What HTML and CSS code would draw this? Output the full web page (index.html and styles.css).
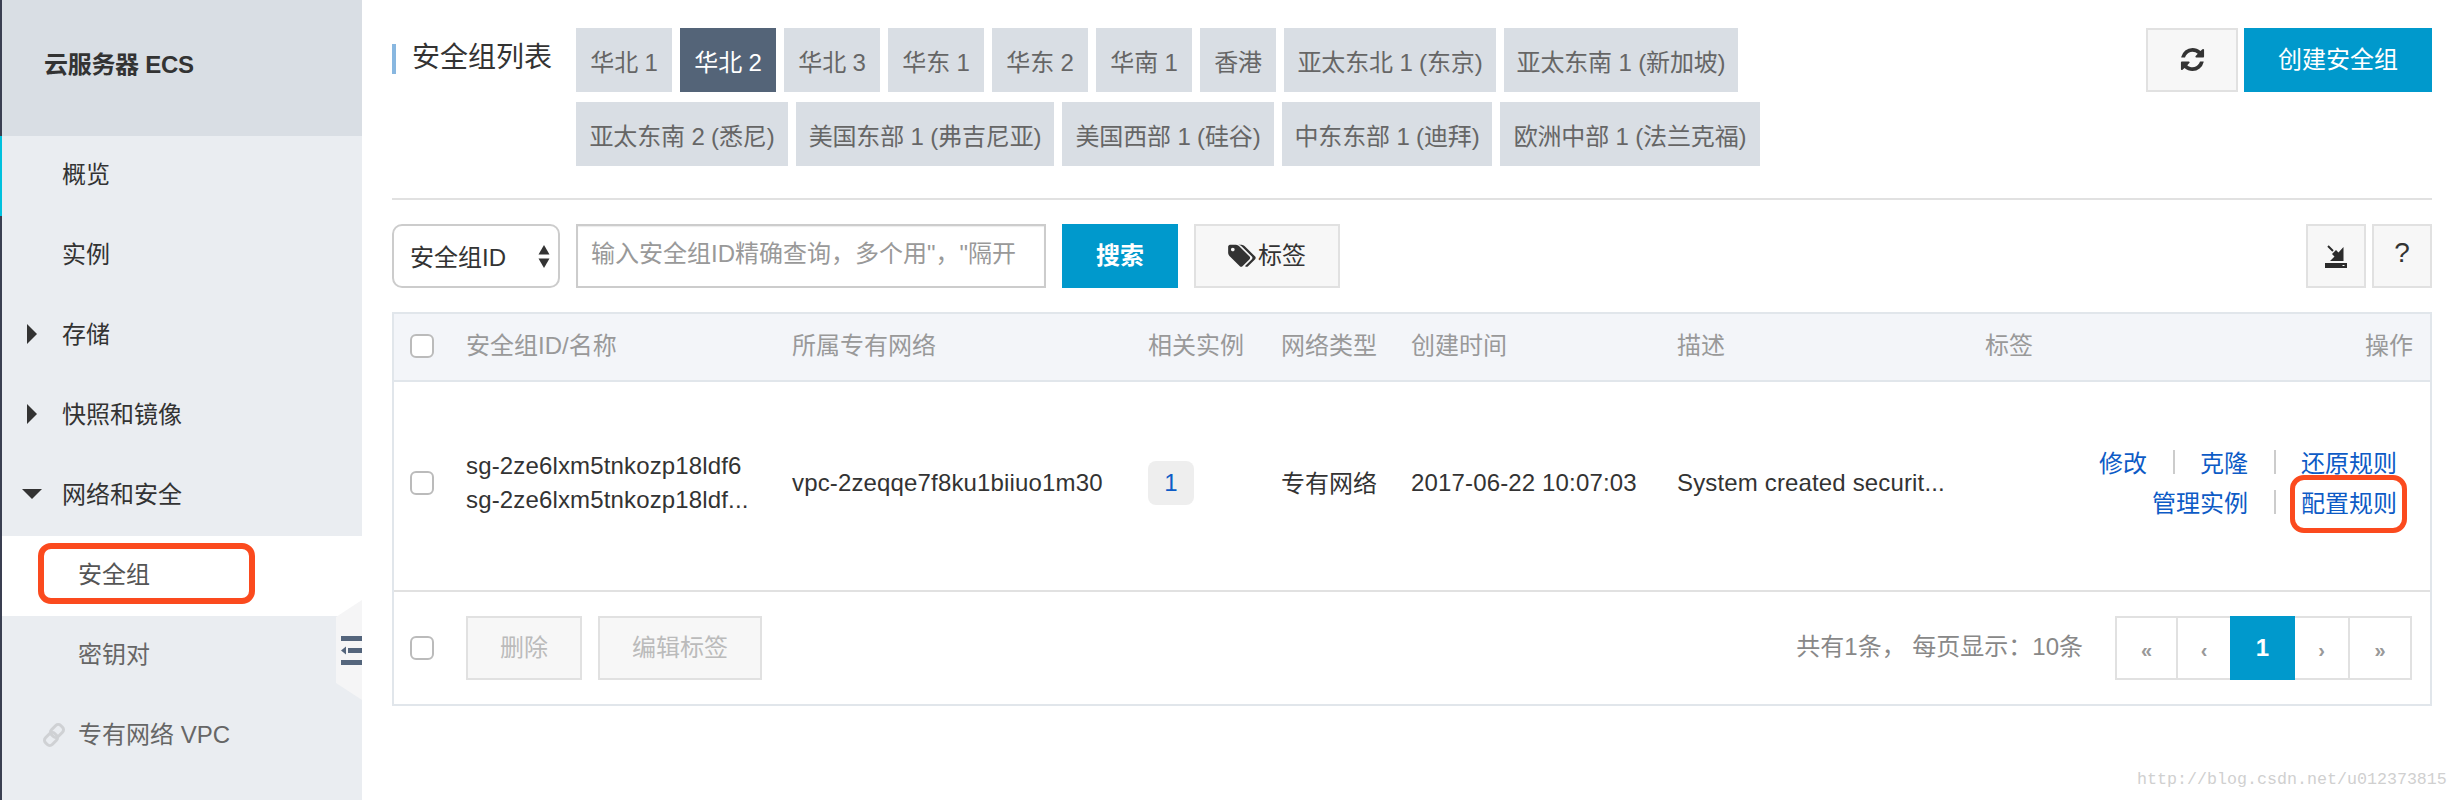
FILE: index.html
```html
<!DOCTYPE html>
<html lang="zh-CN">
<head>
<meta charset="utf-8">
<title>安全组列表</title>
<link rel="stylesheet" href="styles.css">
</head>
<body>
<div class="app">
  <aside class="sidebar">
    <div class="side-head">云服务器 ECS</div>
    <nav class="side-nav">
      <a class="nav-item nav-current">概览</a>
      <a class="nav-item">实例</a>
      <a class="nav-item"><i class="caret-right"></i>存储</a>
      <a class="nav-item"><i class="caret-right"></i>快照和镜像</a>
      <a class="nav-item"><i class="caret-down"></i>网络和安全</a>
      <a class="nav-item sub-item sub-active">安全组<span class="mark mark-nav"></span></a>
      <a class="nav-item sub-item">密钥对</a>
      <a class="nav-item sub-item">
        <svg class="link-icon" viewBox="0 0 22 26" aria-hidden="true"><g fill="none" stroke="#cfd1d4" stroke-width="3"><rect x="-4.75" y="-6.5" width="9.5" height="13" rx="3.5" transform="translate(14 9) rotate(45)"/><rect x="-4.75" y="-6.5" width="9.5" height="13" rx="3.5" transform="translate(8 17) rotate(45)"/></g></svg>
        专有网络 VPC</a>
    </nav>
    <div class="collapse-tab">
      <svg viewBox="0 0 26 100" aria-hidden="true"><polygon points="26,0 0,17 0,83 26,100" fill="#f5f5f6"/><g fill="#54657c"><rect x="5" y="36" width="21" height="5"/><rect x="5" y="60" width="21" height="5"/><rect x="12" y="48" width="14" height="5"/><polygon points="5,50.5 10,46.5 10,54.5"/></g></svg>
    </div>
  </aside>

  <main class="main">
    <header class="top">
      <h1 class="title">安全组列表</h1>
      <div class="tabs">
        <a class="tab w96">华北 1</a>
        <a class="tab w96 tab-on">华北 2</a>
        <a class="tab w96">华北 3</a>
        <a class="tab w96">华东 1</a>
        <a class="tab w96">华东 2</a>
        <a class="tab w96">华南 1</a>
        <a class="tab w76">香港</a>
        <a class="tab w212">亚太东北 1 (东京)</a>
        <a class="tab w234">亚太东南 1 (新加坡)</a>
        <a class="tab w212">亚太东南 2 (悉尼)</a>
        <a class="tab w258">美国东部 1 (弗吉尼亚)</a>
        <a class="tab w212">美国西部 1 (硅谷)</a>
        <a class="tab w210">中东东部 1 (迪拜)</a>
        <a class="tab w260">欧洲中部 1 (法兰克福)</a>
      </div>
      <div class="top-actions">
        <button class="btn btn-refresh" aria-label="刷新">
          <svg class="refresh-icon" viewBox="0 0 1792 1792" aria-hidden="true"><path d="M1639 1056q0 5-1 7-64 268-268 434.5t-478 166.5q-146 0-282.5-55t-243.5-157l-129 129q-19 19-45 19t-45-19-19-45v-448q0-26 19-45t45-19h448q26 0 45 19t19 45-19 45l-137 137q71 66 161 102t187 36q134 0 250-65t186-179q11-17 53-117 8-23 30-23h192q13 0 22.5 9.5t9.5 22.5zm25-800v448q0 26-19 45t-45 19h-448q-26 0-45-19t-19-45 19-45l138-138q-148-137-349-137-134 0-250 65t-186 179q-11 17-53 117-8 23-30 23h-199q-13 0-22.5-9.5t-9.5-22.5v-7q65-268 270-434.5t480-166.5q146 0 284 55.5t245 156.5l130-129q19-19 45-19t45 19 19 45z" fill="#333"/></svg>
        </button>
        <button class="btn btn-primary btn-create">创建安全组</button>
      </div>
    </header>

    <div class="divider"></div>

    <div class="toolbar">
      <div class="select">安全组ID
        <svg class="select-arrows" viewBox="0 0 12 24" aria-hidden="true"><polygon points="6,0 11.5,9.5 0.5,9.5" fill="#333"/><polygon points="6,23 11.5,13.5 0.5,13.5" fill="#333"/></svg>
      </div>
      <input class="search-input" type="text" placeholder="输入安全组ID精确查询，多个用&quot;，&quot;隔开">
      <button class="btn btn-primary btn-search">搜索</button>
      <button class="btn btn-tag">
        <svg class="tag-icon" viewBox="0 0 1920 1792" aria-hidden="true"><path d="M384 448q0-53-37.5-90.5t-90.5-37.5-90.5 37.5-37.5 90.5 37.5 90.5 90.5 37.5 90.5-37.5 37.5-90.5zm1067 576q0 53-37 90l-491 492q-39 37-91 37-53 0-90-37l-715-716q-38-37-64.5-101t-26.5-117v-416q0-52 38-90t90-38h416q53 0 117 26.5t102 64.5l715 714q37 39 37 91zm384 0q0 53-37 90l-491 492q-39 37-91 37-36 0-59-14t-53-45l470-470q37-37 37-90 0-52-37-91l-715-714q-38-38-102-64.5t-117-26.5h224q53 0 117 26.5t102 64.5l715 714q37 39 37 91z" fill="#333"/></svg>标签
      </button>
      <div class="spacer"></div>
      <button class="btn btn-square" aria-label="导出">
        <svg class="export-icon" viewBox="0 0 22 23" aria-hidden="true"><rect x="0" y="18" width="22" height="5" fill="#2b2b2b"/><rect x="17.5" y="20" width="2" height="1" fill="#fff"/><polygon points="18.5,2 18.5,16 5,16 9.5,11.5 7,9 11,5 13.5,7.5" fill="#2b2b2b"/><path d="M3 1 L8 6" stroke="#2b2b2b" stroke-width="2" fill="none"/></svg>
      </button>
      <button class="btn btn-square btn-help">?</button>
    </div>

    <section class="panel">
      <table class="grid">
        <thead>
          <tr>
            <th class="c-check"><input class="check" type="checkbox"></th>
            <th class="c-id">安全组ID/名称</th>
            <th class="c-vpc">所属专有网络</th>
            <th class="c-inst">相关实例</th>
            <th class="c-type">网络类型</th>
            <th class="c-time">创建时间</th>
            <th class="c-desc">描述</th>
            <th class="c-tag">标签</th>
            <th class="c-ops">操作</th>
          </tr>
        </thead>
        <tbody>
          <tr>
            <td><input class="check" type="checkbox"></td>
            <td class="latin"><div class="two-lines">sg-2ze6lxm5tnkozp18ldf6<br>sg-2ze6lxm5tnkozp18ldf...</div></td>
            <td class="latin">vpc-2zeqqe7f8ku1biiuo1m30</td>
            <td><a class="badge">1</a></td>
            <td class="cjk">专有网络</td>
            <td class="latin">2017-06-22 10:07:03</td>
            <td class="latin">System created securit...</td>
            <td></td>
            <td class="ops-cell">
              <div class="ops-line"><a class="op">修改</a><i class="sep"></i><a class="op">克隆</a><i class="sep"></i><a class="op">还原规则</a></div>
              <div class="ops-line"><a class="op">管理实例</a><i class="sep"></i><a class="op op-marked">配置规则<span class="mark mark-op"></span></a></div>
            </td>
          </tr>
        </tbody>
      </table>
      <div class="foot">
        <input class="check" type="checkbox">
        <button class="btn btn-off btn-del">删除</button>
        <button class="btn btn-off btn-edit">编辑标签</button>
        <div class="spacer"></div>
        <span class="count">共有1条， 每页显示：10条</span>
        <div class="pager">
          <a class="pg pg-first">«</a>
          <a class="pg pg-prev">‹</a>
          <a class="pg pg-on">1</a>
          <a class="pg pg-next">›</a>
          <a class="pg pg-last">»</a>
        </div>
      </div>
    </section>
  </main>
</div>
<div class="watermark">http://blog.csdn.net/u012373815</div>
</body>
</html>
```

FILE: styles.css
```css
* { box-sizing: border-box; }
html, body { margin: 0; padding: 0; background: #fff; }
body {
  width: 2458px;
  height: 800px;
  overflow: hidden;
  position: relative;
  font-family: "Liberation Sans", "Noto Sans CJK SC", sans-serif;
  font-size: 24px;
  color: #333;
}
a { text-decoration: none; color: inherit; }
i { font-style: normal; }
.app { display: flex; height: 800px; }
.spacer { flex: 1; }

/* sidebar */
.sidebar {
  width: 362px;
  flex: none;
  background: #eaedf1;
  border-left: 2px solid #3a3f51;
  position: relative;
}
.side-head {
  height: 136px;
  margin-left: -2px;
  padding: 0 0 12px 42px;
  background: #d9dee4;
  border-left: 2px solid #3a3f51;
  display: flex;
  align-items: center;
  font-weight: bold;
  letter-spacing: -0.3px;
  color: #333;
}
.side-nav { display: flex; flex-direction: column; }
.nav-item {
  height: 80px;
  padding: 0 0 8px 60px;
  display: flex;
  align-items: center;
  position: relative;
  color: #333;
}
.nav-current { box-shadow: -2px 0 0 #00c1de; }
.sub-item { padding-left: 76px; color: #666; }
.sub-active { background: #fff; color: #555; }
.caret-right {
  position: absolute;
  left: 25px;
  top: 28px;
  border-left: 10px solid #333;
  border-top: 10px solid transparent;
  border-bottom: 10px solid transparent;
}
.caret-down {
  position: absolute;
  left: 20px;
  top: 33px;
  border-top: 10px solid #333;
  border-left: 10px solid transparent;
  border-right: 10px solid transparent;
}
.link-icon { position: absolute; left: 41px; top: 26px; width: 22px; height: 26px; overflow: visible; }
.collapse-tab { position: absolute; right: 0; top: 600px; width: 26px; height: 100px; }
.collapse-tab svg { display: block; width: 26px; height: 100px; }
.mark { position: absolute; border: 6px solid #fb4a1e; border-radius: 13px; }
.mark-nav { left: 36px; top: 7px; width: 217px; height: 61px; }

/* main */
.main { flex: 1; min-width: 0; padding: 28px 26px 0 30px; }
.top { display: flex; align-items: flex-start; }
.title {
  margin: 16px 0 0;
  width: 184px;
  flex: none;
  height: 30px;
  padding-left: 16px;
  border-left: 4px solid #88b7e0;
  font-size: 28px;
  line-height: 28px;
  font-weight: normal;
  color: #333;
}
.tabs { width: 1200px; display: flex; flex-wrap: wrap; gap: 10px 8px; }
.tab {
  height: 64px;
  display: flex;
  align-items: center;
  justify-content: center;
  background: #d9dee4;
  color: #666;
  white-space: nowrap;
  letter-spacing: -0.15px;
}
.tab-on { background: #546478; color: #fff; }
.w76 { width: 76px; }
.w96 { width: 96px; }
.w210 { width: 210px; }
.w212 { width: 212px; }
.w234 { width: 234px; }
.w258 { width: 258px; }
.w260 { width: 260px; }
.top-actions { margin-left: auto; display: flex; gap: 6px; }

.btn {
  height: 64px;
  padding: 0 0 5px;
  margin: 0;
  display: flex;
  align-items: center;
  justify-content: center;
  border: 2px solid #e1e1e1;
  background: #f7f7f7;
  color: #333;
  font: inherit;
}
.btn-primary { background: #0099cc; border-color: #0099cc; color: #fff; }
.btn-refresh { width: 92px; padding: 0 0 2px; }
.refresh-icon { width: 27px; height: 27px; }
.btn-create { width: 188px; }

.divider { height: 2px; margin-top: 32px; background: #e1e1e1; }

/* toolbar */
.toolbar { display: flex; margin-top: 24px; height: 64px; }
.select {
  width: 168px;
  height: 64px;
  padding: 0 0 2px 16px;
  display: flex;
  align-items: center;
  border: 2px solid #ccc;
  border-radius: 10px;
  background: #fff;
  color: #333;
  position: relative;
}
.select-arrows { position: absolute; right: 8px; top: 19px; width: 12px; height: 24px; }
.search-input {
  width: 470px;
  height: 64px;
  margin-left: 16px;
  padding: 0 13px 5px;
  border: 2px solid #ccc;
  box-shadow: inset 0 1px 1px rgba(0,0,0,.08);
  outline: none;
  background: #fff;
  font: inherit;
  color: #333;
}
.search-input::placeholder { color: #999; opacity: 1; }
.btn-search { width: 116px; margin-left: 16px; font-weight: bold; }
.btn-tag { width: 146px; margin-left: 16px; }
.tag-icon { width: 30px; height: 26px; margin-top: 5px; }
.btn-square { width: 60px; padding: 0; }
.btn-square + .btn-square { margin-left: 6px; }
.export-icon { width: 22px; height: 23px; }
.btn-help { font-size: 28px; padding-bottom: 6px; }

/* table */
.panel { margin-top: 24px; border: 2px solid #e1e6eb; }
.grid { width: 100%; table-layout: fixed; border-collapse: separate; border-spacing: 0; }
.grid th {
  height: 68px;
  padding: 0 0 8px;
  background: #f3f5f9;
  border-bottom: 2px solid #e1e6eb;
  text-align: left;
  font-weight: normal;
  color: #999;
}
.grid th.c-check { padding-bottom: 2px; }
.grid td {
  height: 210px;
  padding: 0 0 6px;
  border-bottom: 2px solid #e1e1e1;
  color: #333;
  vertical-align: middle;
}
.grid td.latin { letter-spacing: 0.15px; }
.grid td.cjk { padding-bottom: 9px; }
.c-check { width: 72px; }
.c-id { width: 326px; }
.c-vpc { width: 356px; }
.c-inst { width: 133px; }
.c-type { width: 130px; }
.c-time { width: 266px; }
.c-desc { width: 308px; }
.c-tag { width: 120px; }
.grid .c-ops { text-align: right; padding-right: 17px; }
.check {
  appearance: none;
  display: block;
  width: 24px;
  height: 24px;
  margin: 0 0 0 16px;
  border: 2px solid #bbb;
  border-radius: 6px;
  background: #fff;
  flex: none;
}
.two-lines { line-height: 34px; }
.badge {
  display: flex;
  width: 46px;
  height: 44px;
  align-items: center;
  justify-content: center;
  background: #eeeeee;
  border-radius: 8px;
  color: #0d5bc6;
}
.grid td.ops-cell { padding: 0 33px 6px 0; }
.ops-line { display: flex; justify-content: flex-end; align-items: center; height: 40px; padding-bottom: 3px; }
.op { color: #0d5bc6; position: relative; white-space: nowrap; }
.op-marked { display: block; }
.mark-op { left: -11px; top: -9px; width: 117px; height: 58px; border-width: 5px; border-radius: 14px; }
.sep { width: 2px; height: 24px; background: #ccc; margin: 0 25.5px; flex: none; }

/* footer */
.foot { display: flex; align-items: center; height: 112px; padding-right: 18px; }
.foot .check { margin-left: 16px; }
.btn-off { color: #bbb; }
.btn-del { width: 116px; margin-left: 32px; }
.btn-edit { width: 164px; margin-left: 16px; }
.count { color: #888; margin-right: 32px; padding-bottom: 8px; }
.pager { display: flex; height: 64px; }
.pg {
  height: 64px;
  display: flex;
  align-items: center;
  justify-content: center;
  padding-top: 4px;
  border: 2px solid #e1e1e1;
  margin-left: -2px;
  color: #999;
  font-size: 20px;
  font-weight: bold;
  background: #fff;
}
.pg-first { width: 63px; margin-left: 0; }
.pg-prev { width: 56px; }
.pg-on { width: 65px; background: #0099cc; border-color: #0099cc; color: #fff; font-size: 24px; position: relative; padding-top: 0; }
.pg-next { width: 57px; }
.pg-last { width: 64px; }

.watermark {
  position: absolute;
  left: 2137px;
  top: 770px;
  font-family: "Liberation Mono", monospace;
  font-size: 16.67px;
  line-height: 20px;
  color: #d0d0d0;
  white-space: nowrap;
}
```
